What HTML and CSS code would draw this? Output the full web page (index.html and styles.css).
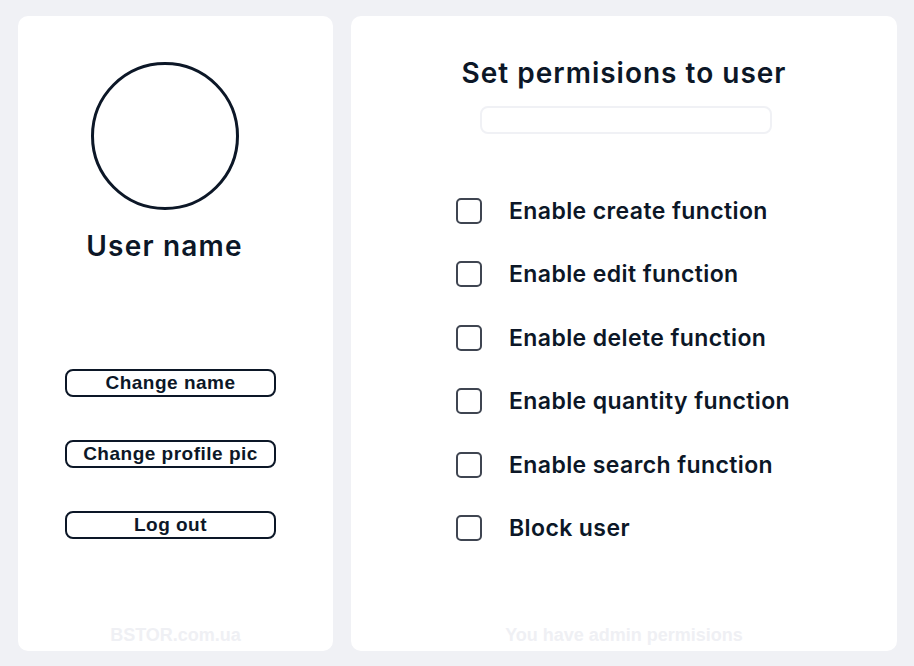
FILE: index.html
```html
<!DOCTYPE html>
<html>
<head>
<meta charset="utf-8">
<link rel="stylesheet" href="styles.css">
</head>
<body>
<div class="page">
  <div class="card left">
    <div class="avatar"></div>
    <div class="username">User name</div>
    <div class="buttons">
      <button class="btn">Change name</button>
      <button class="btn">Change profile pic</button>
      <button class="btn">Log out</button>
    </div>
    <div class="footer">BSTOR.com.ua</div>
  </div>
  <div class="card right">
    <div class="title">Set permisions to user</div>
    <div class="search"></div>
    <div class="perms">
      <div class="perm"><span class="box"></span><span class="label">Enable create function</span></div>
      <div class="perm"><span class="box"></span><span class="label">Enable edit function</span></div>
      <div class="perm"><span class="box"></span><span class="label">Enable delete function</span></div>
      <div class="perm"><span class="box"></span><span class="label">Enable quantity function</span></div>
      <div class="perm"><span class="box"></span><span class="label">Enable search function</span></div>
      <div class="perm"><span class="box"></span><span class="label">Block user</span></div>
    </div>
    <div class="footer">You have admin permisions</div>
  </div>
</div>
</body>
</html>
```
FILE: styles.css
```css
html, body {
  margin: 0;
  padding: 0;
  background: #f0f1f5;
  width: 914px;
  height: 666px;
  overflow: hidden;
}
.page {
  display: flex;
  gap: 18px;
  padding: 16px 17px 15px 18px;
  height: 635px;
}
.card {
  background: #ffffff;
  border-radius: 10px;
  display: flex;
  flex-direction: column;
  align-items: center;
  position: relative;
}
.left {
  width: 315px;
}
.right {
  width: 546px;
}
.avatar {
  margin-top: 46px;
  margin-right: 22px;
  width: 142px;
  height: 142px;
  border: 3px solid #0c1727;
  border-radius: 50%;
}
.username {
  margin-top: 18px;
  margin-right: 22px;
  font-family: Inter, sans-serif;
  font-weight: 600;
  font-size: 28px;
  line-height: 36px;
  color: #0c1727;
  letter-spacing: 1.2px;
}
.buttons {
  margin-top: 105px;
  display: flex;
  flex-direction: column;
  gap: 43px;
  padding-right: 10px;
}
.btn {
  width: 211px;
  height: 28px;
  border: 2.5px solid #0c1727;
  border-radius: 8px;
  background: #fff;
  font-family: "Liberation Sans", Arial, sans-serif;
  font-weight: 700;
  font-size: 19px;
  letter-spacing: 0.5px;
  color: #0c1727;
  padding: 0;
  line-height: 22px;
}
.footer {
  margin-top: auto;
  margin-bottom: 5px;
  font-family: "Liberation Sans", Arial, sans-serif;
  font-weight: 700;
  font-size: 18px;
  line-height: 22px;
  color: #eff0f4;
}
.title {
  margin-top: 39px;
  font-family: Inter, sans-serif;
  font-weight: 600;
  font-size: 28px;
  line-height: 36px;
  color: #0c1727;
  letter-spacing: 1px;
}
.search {
  margin-top: 15px;
  width: 288px;
  height: 24px;
  border: 2px solid #f0f1f5;
  border-radius: 8px;
  margin-left: 4px;
}
.perms {
  margin-top: 63px;
  align-self: flex-start;
  margin-left: 105px;
  display: flex;
  flex-direction: column;
  gap: 36.6px;
}
.perm {
  display: flex;
  align-items: center;
  height: 27px;
}
.box {
  width: 22px;
  height: 22px;
  border: 2.5px solid #3f4551;
  border-radius: 5px;
  flex: none;
}
.label {
  margin-left: 27px;
  font-family: Inter, sans-serif;
  font-weight: 600;
  font-size: 23px;
  color: #0c1727;
  letter-spacing: 0.4px;
}
```
